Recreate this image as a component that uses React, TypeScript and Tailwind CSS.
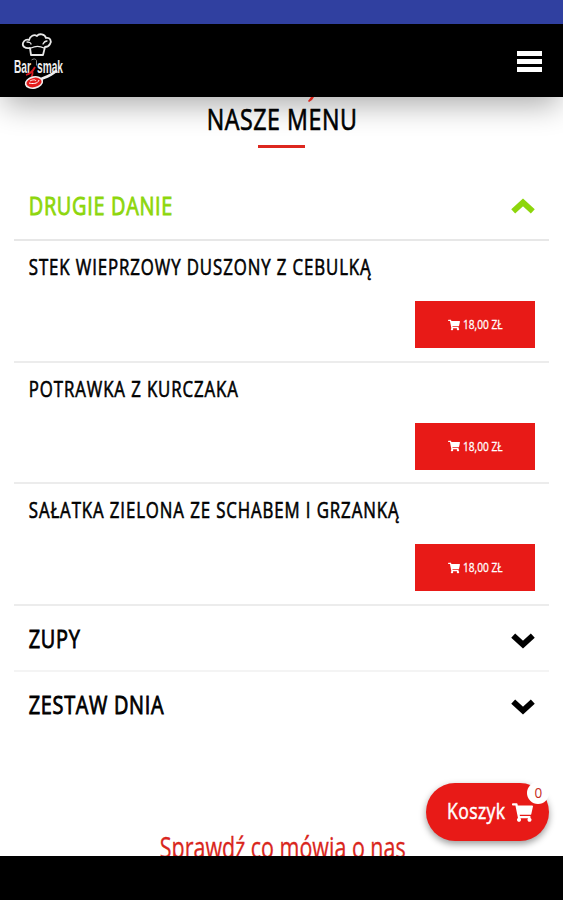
import { useState } from 'react'
import { FaShoppingCart } from 'react-icons/fa'

const dishes = [
  { name: 'STEK WIEPRZOWY DUSZONY Z CEBULKĄ', price: '18,00 ZŁ' },
  { name: 'POTRAWKA Z KURCZAKA', price: '18,00 ZŁ' },
  { name: 'SAŁATKA ZIELONA ZE SCHABEM I GRZANKĄ', price: '18,00 ZŁ' },
]

const categories = ['ZUPY', 'ZESTAW DNIA']

function Chevron({ up = false }: { up?: boolean }) {
  return (
    <svg
      viewBox="0 0 24 16"
      className={up ? 'mb-px h-4 w-6 shrink-0' : 'mt-1.5 h-4 w-6 shrink-0'}
      fill="none"
      stroke="currentColor"
      strokeWidth="5.8"
    >
      <path d={up ? 'M2.2 13.4 12 4.4l9.800 9' : 'M2.2 2.600 12 11.600l9.800-9'} />
    </svg>
  )
}

function Logo() {
  return (
    <svg viewBox="0 0 52 60" className="h-[60px] w-[52px]" fill="none">
      <g stroke="#e8e8e8" strokeWidth="1.8" strokeLinecap="round" strokeLinejoin="round">
        <path d="M17 17c-5 1-8-2-7-5 1-3 4-4 6-3 1-4 5-6 8-4 2-3 8-2 9 2 4-1 6 3 4 6-1 2-3 3-5 3l-2 8H18z" />
        <path d="M18 17c4-2 9-2 13 0M14 11c2 0 4 1 4 2M34 10c-2 0-3 1-4 3" strokeWidth="1.3" />
      </g>
      <g fill="#eee" fontFamily="Liberation Sans Narrow, Liberation Sans, sans-serif" fontWeight="700" fontSize="19">
        <text x="1" y="41.500" textLength="17" lengthAdjust="spacingAndGlyphs">Bar</text>
        <text x="24" y="41.500" textLength="26" lengthAdjust="spacingAndGlyphs">smak</text>
      </g>
      <path d="M18.500 29c2-1.500 4-1.500 5 .5v5" stroke="#8a8a8a" strokeWidth="1" />
      <path d="M13 44c4-1 7-4 9-8M18 46c2-2 2-4 1-7" stroke="#d71920" strokeWidth="1.8" />
      <path d="M28 48c5-2 11-4 15-8" stroke="#eee" strokeWidth="2.500" strokeLinecap="round" />
      <ellipse cx="21" cy="51.500" rx="8.500" ry="5.500" fill="#e31b1b" stroke="#eee" strokeWidth="1.6" transform="rotate(-12 21 51.5)" />
      <path d="M16 52c3 1 9 1 10-3M17 50c2-1 5-2 6 0" stroke="#fff" strokeWidth="1" />
    </svg>
  )
}

export default function App() {
  const [open, setOpen] = useState(true)

  return (
    <div className="flex h-[900px] w-full flex-col overflow-hidden bg-white font-['Open_Sans','Noto_Sans',sans-serif] text-black">
      {/* Status bar */}
      <div className="relative z-20 h-6 shrink-0 bg-[#3040a0]" />

      {/* Header */}
      <header className="relative z-10 flex h-[73px] shrink-0 items-center justify-between bg-black pr-[21px] pl-[13px] shadow-[0_12px_30px_-4px_rgba(0,0,0,0.33)]">
        <Logo />
        <button aria-label="Menu" className="flex flex-col gap-[3px] pt-[1px]">
          <span className="h-[5px] w-[25px] bg-white" />
          <span className="h-[5px] w-[25px] bg-white" />
          <span className="h-[5px] w-[25px] bg-white" />
        </button>
      </header>

      <main className="flex min-h-0 flex-1 flex-col overflow-hidden px-[14px]">
        {/* Section title */}
        <div className="relative z-10 flex h-[76px] shrink-0 flex-col items-center">
          <svg viewBox="0 0 6 5" className="ml-[58px] h-[5px] w-[6px] shrink-0">
            <path d="M3 0h3L4 3 1 5 0 4z" fill="#d9261c" />
          </svg>
          <h2 className="h-[43px] scale-x-[0.8] pl-[2px] text-[29px] leading-[34px] tracking-[0.7px] whitespace-nowrap [-webkit-text-stroke:0.7px]">NASZE MENU</h2>
          <span className="h-[3px] w-[47px] shrink-0 bg-[#dd281f]" />
        </div>

        {/* Open category */}
        <button
          onClick={() => setOpen(!open)}
          className="flex h-[68px] shrink-0 items-center justify-between border-b-2 border-[#e7e7e7] px-[14px] text-[#8dd60c]"
        >
          <span className="origin-left scale-x-[0.765] pb-[1px] pl-[1px] text-[26px] tracking-[0.9px] whitespace-nowrap [-webkit-text-stroke:0.9px]">DRUGIE DANIE</span>
          <Chevron up={open} />
        </button>
        {open &&
          dishes.map((dish) => (
            <article key={dish.name} className="flex h-[121.7px] shrink-0 flex-col border-b-2 border-[#ececec] px-[14px]">
              <h3 className="h-[60px] origin-left scale-x-[0.8] pt-[10px] pl-[1px] text-[21px] leading-[32px] tracking-[1.13px] whitespace-nowrap [-webkit-text-stroke:0.6px]">{dish.name}</h3>
              <button className="flex h-[47px] w-[120px] items-center justify-center gap-[3px] self-end bg-[#e81a17] text-white">
                <FaShoppingCart className="h-3 w-3" />
                <span className="w-[40px] pb-[3px] text-left">
                  <span className="inline-block origin-left scale-x-[0.78] text-[13px] whitespace-nowrap [-webkit-text-stroke:0.3px]">{dish.price}</span>
                </span>
              </button>
            </article>
          ))}

        {/* Closed categories */}
        {categories.map((name) => (
          <button key={name} className="flex h-[66px] shrink-0 items-center justify-between border-b-2 border-[#f4f4f4] px-[14px] last-of-type:border-transparent">
            <span className="origin-left scale-x-[0.765] pl-[1px] text-[26px] tracking-[0.9px] whitespace-nowrap [-webkit-text-stroke:0.9px]">{name}</span>
            <Chevron />
          </button>
        ))}

        <h2 className="mt-[89px] scale-x-[0.74] self-center pl-[3px] text-[29px] leading-[40px] whitespace-nowrap text-[#d9261c] [-webkit-text-stroke:0.3px]">Sprawdź co mówią o nas</h2>
      </main>

      {/* Basket */}
      <button className="absolute top-[783px] left-[426px] z-10 flex h-[58px] w-[123px] items-center rounded-full bg-[#e81a17] pl-[21px] text-white shadow-[0_3px_7px_rgba(0,0,0,0.4)]">
        <span className="w-[65px] origin-left scale-x-[0.8] pb-[3px] text-left text-[22px] tracking-[0.5px] [-webkit-text-stroke:0.5px]">Koszyk</span>
        <FaShoppingCart className="h-[21px] w-[21px]" />
        <span className="absolute -top-[1px] right-0 flex h-[22px] w-[22px] items-center justify-center rounded-full bg-white text-[15px] text-[#c62a22]">
          <span className="scale-x-[0.9] pb-[2px]">0</span>
        </span>
      </button>

      {/* Navigation bar */}
      <div className="relative z-20 h-11 shrink-0 bg-black" />
    </div>
  )
}
